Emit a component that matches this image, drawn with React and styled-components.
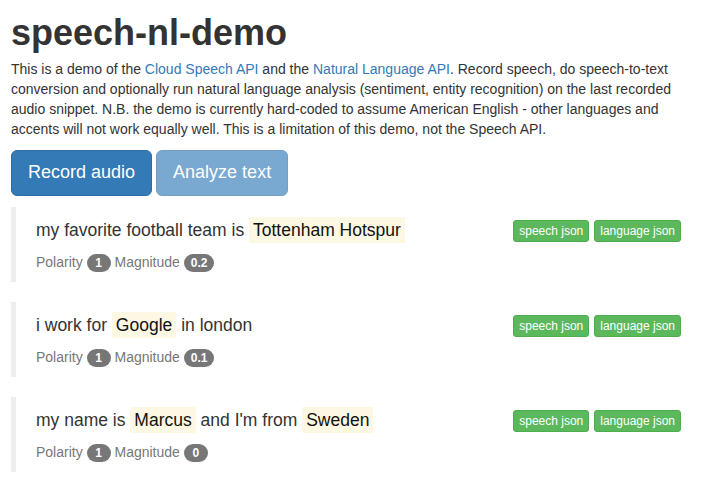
import React from 'react';
import styled, { createGlobalStyle } from 'styled-components';

const GlobalStyle = createGlobalStyle`
    body {
        margin: 0;
        background: #fff;
        color: #333;
        font-family: "Liberation Sans", Arial, sans-serif;
        font-size: 14px;
        line-height: 1.42857;
    }
`;

const results = [
    {
        parts: ['my favorite football team is ', {entity: 'Tottenham Hotspur'}],
        polarity: '1',
        magnitude: '0.2'
    },
    {
        parts: ['i work for ', {entity: 'Google'}, ' in london'],
        polarity: '1',
        magnitude: '0.1'
    },
    {
        parts: ['my name is ', {entity: 'Marcus'}, " and I'm from ", {entity: 'Sweden'}],
        polarity: '1',
        magnitude: '0'
    }
];

function Result({result}) {
    return (
        <Quote>
            <div className="top">
                <div className="sentence">
                    {result.parts.map((part, i) => {
                        if (typeof part === 'string') return <span key={i}>{part}</span>;
                        return <Entity key={i}>{part.entity}</Entity>;
                    })}
                </div>
                <div className="actions">
                    <SmallButton>speech json</SmallButton>
                    <SmallButton>language json</SmallButton>
                </div>
            </div>
            <Footer>
                Polarity <Badge>{result.polarity}</Badge> Magnitude <Badge>{result.magnitude}</Badge>
            </Footer>
        </Quote>
    )
}

function App() {
    return (
        <Page>
            <GlobalStyle />
            <Title>speech-nl-demo</Title>
            <Intro>
                This is a demo of the <a href="#">Cloud Speech API</a> and the <a href="#">Natural Language API</a>. Record speech, do speech-to-text<br />
                conversion and optionally run natural language analysis (sentiment, entity recognition) on the last recorded<br />
                audio snippet. N.B. the demo is currently hard-coded to assume American English - other languages and<br />
                accents will not work equally well. This is a limitation of this demo, not the Speech API.
            </Intro>
            <Toolbar>
                <BigButton>Record audio</BigButton>
                <BigButton disabled>Analyze text</BigButton>
            </Toolbar>
            {results.map((result, i) => (
                <Result key={i} result={result} />
            ))}
        </Page>
    )
}

const Page = styled.div`
    padding: 0 5px 0 11px;
`;

const Title = styled.h1`
    margin: 13px 0 7px;
    font-size: 36px;
    font-weight: bold;
    line-height: 1.1;
    color: #333;
`;

const Intro = styled.p`
    margin: 0 0 10px;
    white-space: nowrap;
    a {
        color: #337ab7;
        text-decoration: none;
    }
`;

const Toolbar = styled.div`
    display: flex;
    gap: 4px;
    margin-bottom: 11px;
`;

const BigButton = styled.button`
    font-family: inherit;
    font-size: 18px;
    line-height: 1.3333;
    padding: 10px 16px;
    border-radius: 6px;
    border: 1px solid #2e6da4;
    background: #337ab7;
    color: #fff;
    cursor: pointer;
    &:disabled {
        opacity: 0.65;
        cursor: not-allowed;
    }
`;

const Quote = styled.blockquote`
    margin: 0 0 20px;
    padding: 10px 20px;
    border-left: 5px solid #eee;
    font-size: 17.5px;
    .top {
        display: flex;
        justify-content: space-between;
        align-items: center;
        line-height: 26px;
    }
    .sentence {
        white-space: pre;
    }
    .actions {
        display: flex;
        gap: 5px;
        margin-top: 2px;
    }
`;

const Entity = styled.span`
    background: #fcf8e3;
    color: #111;
    padding: 3px 4px;
`;

const SmallButton = styled.button`
    font-family: inherit;
    font-size: 12px;
    line-height: 1.5;
    padding: 1px 5px;
    border-radius: 3px;
    border: 1px solid #4cae4c;
    background: #5cb85c;
    color: #fff;
    cursor: pointer;
`;

const Footer = styled.footer`
    margin-top: 9px;
    font-size: 14px;
    line-height: 20px;
    color: #777;
`;

const Badge = styled.span`
    display: inline-block;
    min-width: 10px;
    padding: 3px 7px;
    font-size: 12px;
    font-weight: bold;
    line-height: 1;
    color: #fff;
    text-align: center;
    vertical-align: middle;
    background-color: #777;
    border-radius: 10px;
`;

export default App;
